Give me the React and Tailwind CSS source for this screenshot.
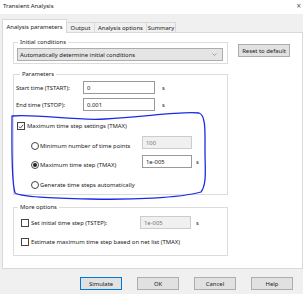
import React from 'react';

const Check = ({ checked }) => (
    <span className="flex items-center justify-center w-[8px] h-[8px] border border-[#444] bg-white shrink-0">
        {checked && (
            <svg width="7" height="7" viewBox="0 0 7 7">
                <path d="M1 3.6 L2.8 5.4 L6 1.4" fill="none" stroke="#222" strokeWidth="0.9" />
            </svg>
        )}
    </span>
);

const Radio = ({ checked }) => (
    <span className="flex items-center justify-center w-[8px] h-[8px] rounded-full border border-[#444] bg-white shrink-0">
        {checked && <span className="w-[4px] h-[4px] rounded-full bg-[#222]" />}
    </span>
);

const Field = ({ value, disabled, className }) => (
    <div
        className={`h-[13px] flex items-center pl-[3px] border ${
            disabled ? 'bg-[#f0f0f0] border-[#cccccc] text-[#777]' : 'bg-white border-[#999] text-[#1a1a1a]'
        } ${className}`}
    >
        {value}
    </div>
);

const Button = ({ children, focused }) => (
    <div
        className={`w-[42px] h-[13px] flex items-center justify-center bg-[#e1e1e1] border ${
            focused ? 'border-[#0078d7]' : 'border-[#adadad]'
        }`}
    >
        {children}
    </div>
);

const tabs = [
    { label: 'Output', w: 'w-[29px]' },
    { label: 'Analysis options', w: 'w-[53px]' },
    { label: 'Summary', w: 'w-[30px]' },
];

export default function App() {
    return (
        <div className="relative w-[303px] h-[294px] overflow-hidden bg-[#f0f0f0] text-[5.9px] leading-[8px] text-[#1a1a1a] font-['Noto_Sans',sans-serif]">
            {/* title bar */}
            <div className="h-[14px] bg-white flex items-start justify-between pt-[2px] pl-[3px] pr-[2px]">
                <span className="text-[6px]">Transient Analysis</span>
                <span className="text-[8px] leading-[8px] text-[#555]">×</span>
            </div>

            {/* tabs */}
            <div className="mt-[5px] h-[13px] flex items-end pl-[2px]">
                <div className="relative z-10 -mb-px w-[65px] h-[14px] bg-white border border-b-0 border-[#d9d9d9] flex items-center justify-center">
                    Analysis parameters
                </div>
                {tabs.map((t) => (
                    <div
                        key={t.label}
                        className={`${t.w} -ml-px h-[10px] border border-b-0 border-[#d9d9d9] bg-[#f0f0f0] flex items-center justify-center`}
                    >
                        {t.label}
                    </div>
                ))}
            </div>

            {/* panel */}
            <div className="ml-[2px] w-[301px] h-[237px] bg-white border border-[#d9d9d9] flex pt-[5px] pl-[10px]">
                <div className="w-[215px] flex flex-col">
                    <fieldset className="border border-[#dcdcdc]">
                        <legend className="ml-[4px] px-[2px] leading-[8px]">Initial conditions</legend>
                        <div className="mt-[2px] mb-[2px] ml-[3px] w-[206px] h-[13px] bg-[#e5e5e5] border border-[#acacac] flex items-center justify-between pl-[2px] pr-[5px]">
                            <span>Automatically determine initial conditions</span>
                            <svg width="5" height="3" viewBox="0 0 5 3">
                                <path d="M0.5 0.5 L2.5 2.5 L4.5 0.5" fill="none" stroke="#888" strokeWidth="0.7" />
                            </svg>
                        </div>
                    </fieldset>

                    <fieldset className="mt-[6px] border border-[#dcdcdc] pl-[2px] pb-[5px]">
                        <legend className="ml-[4px] px-[2px] leading-[8px]">Parameters</legend>
                        <div className="mt-[3px] h-[13px] flex items-center">
                            <span className="w-[67px]">Start time (TSTART):</span>
                            <Field value="0" className="w-[72px]" />
                            <span className="ml-[7px]">s</span>
                        </div>
                        <div className="mt-[4px] h-[13px] flex items-center">
                            <span className="w-[67px]">End time (TSTOP):</span>
                            <Field value="0.001" className="w-[72px]" />
                            <span className="ml-[7px]">s</span>
                        </div>
                        <div className="mt-[11px] h-[8px] flex items-center pl-[1px]">
                            <Check checked />
                            <span className="ml-[2px]">Maximum time step settings (TMAX)</span>
                        </div>
                        <div className="mt-[6px] h-[14px] flex items-start">
                            <div className="ml-[15px] w-[111px] mt-[6px] flex items-center">
                                <Radio />
                                <span className="ml-[1px]">Minimum number of time points</span>
                            </div>
                            <Field value="100" disabled className="w-[50px]" />
                        </div>
                        <div className="mt-[5px] h-[14px] flex items-start">
                            <div className="ml-[15px] w-[111px] mt-[6px] flex items-center">
                                <Radio checked />
                                <span className="ml-[1px]">Maximum time step (TMAX)</span>
                            </div>
                            <Field value="1e-005" className="w-[50px]" />
                            <span className="ml-[4px] mt-[3px]">s</span>
                        </div>
                        <div className="mt-[12px] h-[8px] flex items-center">
                            <div className="ml-[15px] flex items-center">
                                <Radio />
                                <span className="ml-[1px]">Generate time steps automatically</span>
                            </div>
                        </div>
                    </fieldset>

                    <fieldset className="mt-[8px] border border-[#dcdcdc] pb-[9px]">
                        <legend className="ml-[4px] px-[2px] leading-[8px]">More options</legend>
                        <div className="mt-[5px] h-[13px] flex items-center">
                            <div className="ml-[7px] w-[119px] flex items-center">
                                <Check />
                                <span className="ml-[2px]">Set initial time step (TSTEP):</span>
                            </div>
                            <Field value="1e-005" disabled className="w-[51px]" />
                            <span className="ml-[5px]">s</span>
                        </div>
                        <div className="mt-[9px] h-[8px] flex items-center ml-[7px]">
                            <Check />
                            <span className="ml-[2px]">Estimate maximum time step based on net list (TMAX)</span>
                        </div>
                    </fieldset>
                </div>

                <div className="ml-[10px] mt-[6px]">
                    <div className="w-[52px] h-[13px] flex items-center justify-center bg-[#e1e1e1] border border-[#adadad]">
                        Reset to default
                    </div>
                </div>
            </div>

            {/* footer buttons */}
            <div className="mt-[8px] flex justify-end gap-[15px] pr-[10px]">
                <Button focused>Simulate</Button>
                <Button>OK</Button>
                <Button>Cancel</Button>
                <Button>Help</Button>
            </div>

            {/* hand-drawn annotation */}
            <svg className="absolute inset-0 pointer-events-none" width="303" height="294" viewBox="0 0 303 294">
                <path
                    d="M12 116 C40 114 75 121 105 119 C145 117 180 111 199 113 C206 115 205 132 205 150 C205 170 207 184 201 192 C180 198 130 200 90 199 C50 198 22 197 15 193 C11 180 12 140 12 116"
                    fill="none"
                    stroke="#1a2be8"
                    strokeWidth="1.3"
                    strokeLinecap="round"
                />
            </svg>
        </div>
    );
}
